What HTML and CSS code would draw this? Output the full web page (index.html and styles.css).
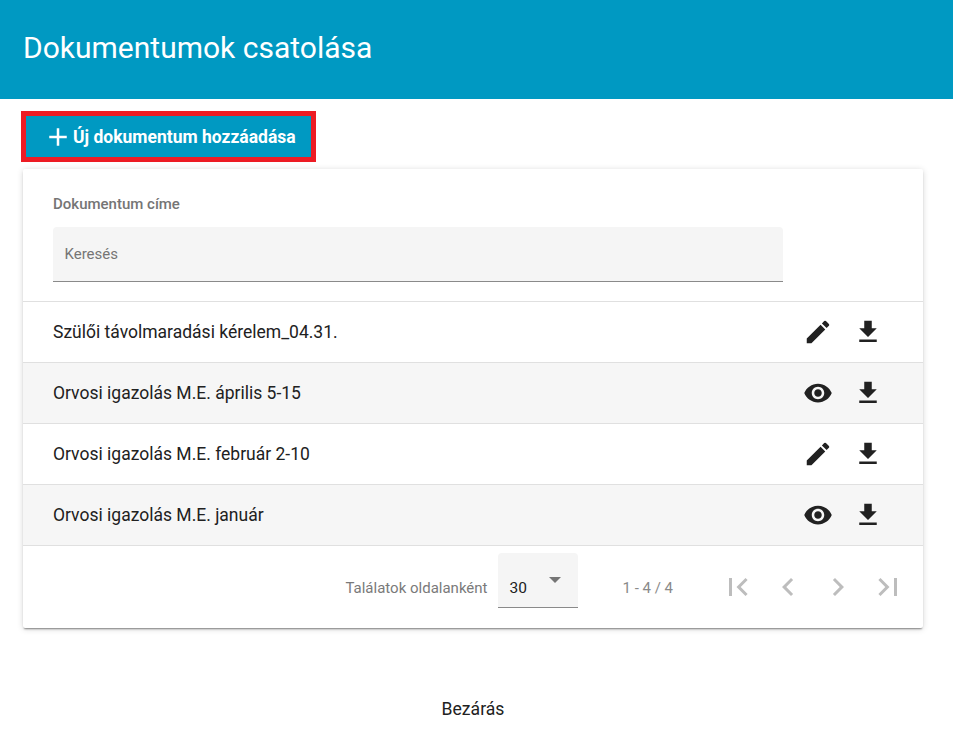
FILE: index.html
```html
<!DOCTYPE html>
<html lang="hu">
<head>
<meta charset="utf-8">
<title>Dokumentumok csatolása</title>
<link rel="stylesheet" href="styles.css">
</head>
<body>
<header class="header"><h1 class="title">Dokumentumok csatolása</h1></header>
<main class="content">
  <div class="add-frame">
    <button class="add-btn"><svg class="add-icon" viewBox="0 0 24 24"><path d="M19 13h-6v6h-2v-6H5v-2h6V5h2v6h6v2z"/></svg>Új dokumentum hozzáadása</button>
  </div>
  <section class="card">
    <div class="filter">
      <div class="filter-label">Dokumentum címe</div>
      <div class="search">Keresés</div>
    </div>
    <div class="row">
      <span class="name">Szülői távolmaradási kérelem_04.31.</span>
      <span class="actions">
        <svg class="icon" viewBox="0 0 24 24"><path d="M3 17.25V21h3.75L17.81 9.94l-3.75-3.75L3 17.25zM20.71 7.04a1 1 0 0 0 0-1.41l-2.34-2.34a1 1 0 0 0-1.41 0l-1.83 1.83 3.75 3.75 1.83-1.83z"/></svg>
        <svg class="icon" viewBox="0 0 24 24"><path d="M19 9h-4V3H9v6H5l7 7 7-7zM5 18v2h14v-2H5z"/></svg>
      </span>
    </div>
    <div class="row alt">
      <span class="name">Orvosi igazolás M.E. április 5-15</span>
      <span class="actions">
        <svg class="icon" viewBox="0 0 24 24"><path d="M12 4.5C7 4.5 2.73 7.61 1 12c1.73 4.39 6 7.5 11 7.5s9.27-3.11 11-7.5c-1.73-4.39-6-7.5-11-7.5zM12 17c-2.76 0-5-2.24-5-5s2.24-5 5-5 5 2.24 5 5-2.24 5-5 5zm0-8c-1.66 0-3 1.34-3 3s1.34 3 3 3 3-1.34 3-3-1.34-3-3-3z"/></svg>
        <svg class="icon" viewBox="0 0 24 24"><path d="M19 9h-4V3H9v6H5l7 7 7-7zM5 18v2h14v-2H5z"/></svg>
      </span>
    </div>
    <div class="row">
      <span class="name">Orvosi igazolás M.E. február 2-10</span>
      <span class="actions">
        <svg class="icon" viewBox="0 0 24 24"><path d="M3 17.25V21h3.75L17.81 9.94l-3.75-3.75L3 17.25zM20.71 7.04a1 1 0 0 0 0-1.41l-2.34-2.34a1 1 0 0 0-1.41 0l-1.83 1.83 3.75 3.75 1.83-1.83z"/></svg>
        <svg class="icon" viewBox="0 0 24 24"><path d="M19 9h-4V3H9v6H5l7 7 7-7zM5 18v2h14v-2H5z"/></svg>
      </span>
    </div>
    <div class="row alt">
      <span class="name">Orvosi igazolás M.E. január</span>
      <span class="actions">
        <svg class="icon" viewBox="0 0 24 24"><path d="M12 4.5C7 4.5 2.73 7.61 1 12c1.73 4.39 6 7.5 11 7.5s9.27-3.11 11-7.5c-1.73-4.39-6-7.5-11-7.5zM12 17c-2.76 0-5-2.24-5-5s2.24-5 5-5 5 2.24 5 5-2.24 5-5 5zm0-8c-1.66 0-3 1.34-3 3s1.34 3 3 3 3-1.34 3-3-1.34-3-3-3z"/></svg>
        <svg class="icon" viewBox="0 0 24 24"><path d="M19 9h-4V3H9v6H5l7 7 7-7zM5 18v2h14v-2H5z"/></svg>
      </span>
    </div>
    <div class="pager">
      <span class="pager-label">Találatok oldalanként</span>
      <div class="select"><span>30</span><i class="caret"></i></div>
      <span class="range">1 - 4 / 4</span>
      <div class="nav">
        <svg class="nav-icon" viewBox="0 0 24 24"><path d="M18.41 16.59L13.82 12l4.59-4.59L17 6l-6 6 6 6zM6 6h2v12H6z"/></svg>
        <svg class="nav-icon" viewBox="0 0 24 24"><path d="M15.41 7.41L14 6l-6 6 6 6 1.41-1.41L10.83 12z"/></svg>
        <svg class="nav-icon" viewBox="0 0 24 24"><path d="M10 6L8.59 7.41 13.17 12l-4.58 4.59L10 18l6-6z"/></svg>
        <svg class="nav-icon" viewBox="0 0 24 24"><path d="M5.59 7.41L10.18 12l-4.59 4.59L7 18l6-6-6-6zM16 6h2v12h-2z"/></svg>
      </div>
    </div>
  </section>
</main>
<footer class="footer"><button class="close">Bezárás</button></footer>
</body>
</html>
```

FILE: styles.css
```css
* { box-sizing: border-box; }
html, body { margin: 0; padding: 0; }
body { width: 953px; height: 749px; overflow: hidden; background: #fff; font-family: Roboto, sans-serif; color: #212121; }
.header { height: 99px; background: #0099c2; display: flex; align-items: center; padding: 0 23px 3px; }
.title { margin: 0; font-size: 30px; font-weight: 400; color: #fff; line-height: 1; }
.content { padding: 12px 30px 0 23px; }
.add-frame { margin-left: -2px; width: 295px; height: 51px; border: 5px solid #ed1c24; }
.add-btn { width: 100%; height: 100%; border: 0; padding: 0 0 0 17px; background: #0099c2; color: #fff; font: 700 17.5px Roboto, sans-serif; display: flex; align-items: center; }
.add-icon { width: 30px; height: 30px; fill: #fff; flex: none; }
.card { margin-top: 7px; background: #fff; box-shadow: 0 2px 2px -1px rgba(0,0,0,.45), 0 1px 6px 0 rgba(0,0,0,.16); border-radius: 2px; }
.filter { height: 132px; padding: 27px 30px 0; }
.filter-label { font-size: 15px; font-weight: 500; color: #757575; line-height: 16px; }
.search { margin-top: 15px; width: 730px; height: 55px; background: #f5f5f5; border-bottom: 1px solid #8a8a8a; border-radius: 4px 4px 0 0; padding: 0 11.5px; font-size: 15px; color: #757575; line-height: 54px; }
.row { height: 61px; display: flex; align-items: center; justify-content: space-between; padding: 0 30px; border-top: 1px solid #e0e0e0; }
.alt { background: #f6f6f6; }
.name { font-size: 17.5px; color: #212121; }
.actions { display: flex; gap: 20px; margin-right: 10px; align-items: center; }
.icon { width: 30px; height: 30px; fill: #212121; display: block; }
.pager { height: 83px; border-top: 1px solid #e0e0e0; display: flex; align-items: center; justify-content: flex-end; padding: 0 17px 0 0; }
.pager-label { font-size: 15px; color: #7a7a7a; margin-right: 11px; padding-top: 2px; }
.select { width: 80px; height: 55px; margin-bottom: 14px; background: #f5f5f5; border-bottom: 1px solid #8a8a8a; border-radius: 4px 4px 0 0; padding: 0 11px; font-size: 15.5px; color: #212121; line-height: 70px; position: relative; }
.caret { position: absolute; left: 51px; top: 24px; width: 0; height: 0; border-left: 6px solid transparent; border-right: 6px solid transparent; border-top: 6px solid #757575; }
.range { font-size: 15px; color: #8a8a8a; margin-left: 44px; margin-right: 47px; padding-top: 2px; }
.nav { display: flex; gap: 14px; }
.nav-icon { width: 36px; height: 36px; fill: #bdbdbd; display: block; }
.footer { position: absolute; left: 0; right: 0; top: 691px; display: flex; justify-content: center; }
.close { border: 0; background: none; font: 400 17.6px Roboto, sans-serif; color: #212121; padding: 0 7px 0 0; height: 36px; }
```
